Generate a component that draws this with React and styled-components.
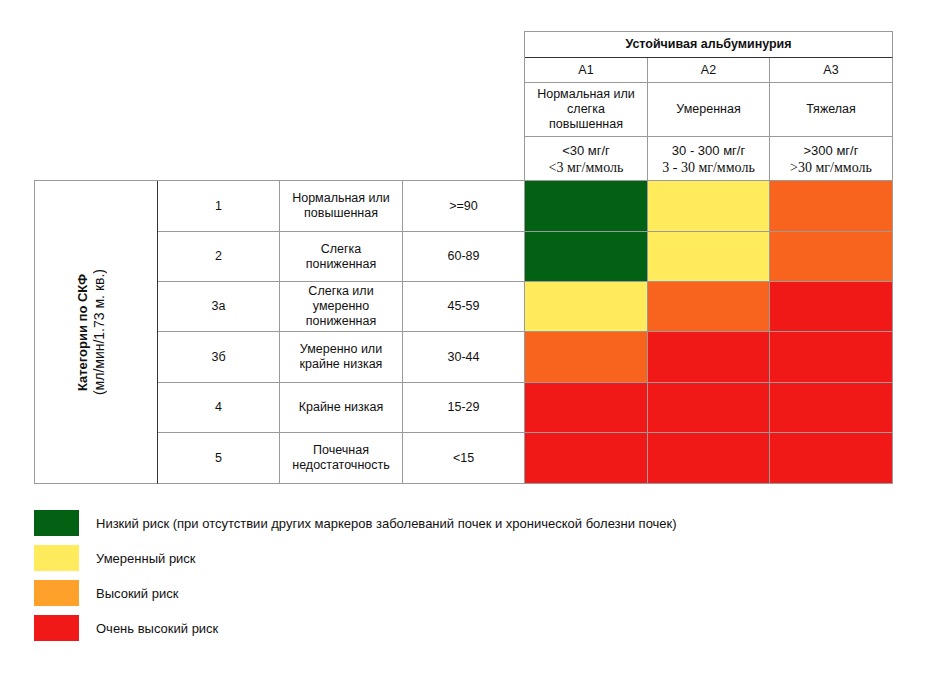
import React from 'react';
import styled, { createGlobalStyle } from 'styled-components';

const GlobalStyle = createGlobalStyle`
  body {
    margin: 0;
    background: #fff;
    font-family: "Liberation Sans", Arial, sans-serif;
    color: #111;
  }
`;

const COLORS = {
  g: '#036114',
  y: '#ffeb5b',
  o: '#f8641e',
  r: '#f11818',
  legendOrange: '#fda12a',
};

const LINE = '#9a9a9a';
const DARK = '#333';

const Page = styled.div`
  padding: 31px 0 40px 34px;
`;

const HeaderGrid = styled.div`
  display: grid;
  grid-template-columns: 123px 122px 123px;
  grid-template-rows: 26px 25px 54px 43px;
  width: max-content;
  margin-left: 490px;
  border-top: 1px solid ${LINE};
  border-left: 1px solid ${LINE};
`;

const HeadCell = styled.div`
  box-sizing: border-box;
  display: flex;
  flex-direction: column;
  align-items: center;
  justify-content: center;
  text-align: center;
  font-size: 12.5px;
  line-height: 15px;
  padding: 0 5px;
  border-right: 1px solid ${LINE};
  border-bottom: ${(p) => (p.$last ? 'none' : `1px solid ${LINE}`)};
`;

const Title = styled(HeadCell)`
  grid-column: 1 / -1;
  font-weight: bold;
  border-bottom: 1px solid ${DARK};
`;

const SansLine = styled.span`
  font-size: 13px;
  line-height: 17px;
`;

const SerifLine = styled.span`
  font-family: "Liberation Serif", "Times New Roman", serif;
  font-size: 14px;
  line-height: 17px;
`;

const BodyGrid = styled.div`
  display: grid;
  grid-template-columns: 123px 122px 123px 122px 123px 122px 123px;
  grid-template-rows: 51px 50px 50px 51px 50px 51px;
  width: max-content;
  border-top: 1px solid ${LINE};
  border-left: 1px solid ${LINE};
`;

const Cell = styled.div`
  box-sizing: border-box;
  display: flex;
  align-items: center;
  justify-content: center;
  text-align: center;
  font-size: 12.5px;
  line-height: 15px;
  padding: 0 7px;
  border-right: 1px solid ${LINE};
  border-bottom: 1px solid ${LINE};
  background: ${(p) => p.$color || 'transparent'};
`;

const LabelCell = styled(Cell)`
  grid-row: 1 / -1;
  grid-column: 1;
  padding: 0 10px 0 0;
  border-right: 1px solid ${DARK};
`;

const VerticalText = styled.div`
  writing-mode: vertical-rl;
  transform: rotate(180deg);
  font-size: 14px;
  line-height: 17px;
  text-align: center;

  b {
    display: block;
    font-size: 13px;
  }
`;

const Legend = styled.div`
  display: flex;
  flex-direction: column;
  gap: 9px;
  margin-top: 26px;
`;

const LegendRow = styled.div`
  display: flex;
  align-items: center;
  gap: 17px;
  font-size: 13px;
`;

const Swatch = styled.span`
  width: 45px;
  height: 26px;
  background: ${(p) => p.$color};
  flex: none;
`;

const rows = [
  { cat: '1', desc: 'Нормальная или повышенная', range: '>=90', risk: ['g', 'y', 'o'] },
  { cat: '2', desc: 'Слегка пониженная', range: '60-89', risk: ['g', 'y', 'o'] },
  { cat: '3а', desc: 'Слегка или умеренно пониженная', range: '45-59', risk: ['y', 'o', 'r'] },
  { cat: '3б', desc: 'Умеренно или крайне низкая', range: '30-44', risk: ['o', 'r', 'r'] },
  { cat: '4', desc: 'Крайне низкая', range: '15-29', risk: ['r', 'r', 'r'] },
  { cat: '5', desc: 'Почечная недостаточность', range: '<15', risk: ['r', 'r', 'r'] },
];

const columns = [
  { code: 'А1', name: 'Нормальная или слегка повышенная', top: '<30 мг/г', bottom: '<3 мг/ммоль' },
  { code: 'А2', name: 'Умеренная', top: '30 - 300 мг/г', bottom: '3 - 30 мг/ммоль' },
  { code: 'А3', name: 'Тяжелая', top: '>300 мг/г', bottom: '>30 мг/ммоль' },
];

const legend = [
  { color: COLORS.g, text: 'Низкий риск (при отсутствии других маркеров заболеваний почек и хронической болезни почек)' },
  { color: COLORS.y, text: 'Умеренный риск' },
  { color: COLORS.legendOrange, text: 'Высокий риск' },
  { color: COLORS.r, text: 'Очень высокий риск' },
];

export default function App() {
  return (
    <Page>
      <GlobalStyle />
      <HeaderGrid>
        <Title>Устойчивая альбуминурия</Title>
        {columns.map((c) => (
          <HeadCell key={c.code}>{c.code}</HeadCell>
        ))}
        {columns.map((c) => (
          <HeadCell key={c.code + 'n'}>{c.name}</HeadCell>
        ))}
        {columns.map((c) => (
          <HeadCell key={c.code + 'v'} $last>
            <SansLine>{c.top}</SansLine>
            <SerifLine>{c.bottom}</SerifLine>
          </HeadCell>
        ))}
      </HeaderGrid>

      <BodyGrid>
        <LabelCell>
          <VerticalText>
            <b>Категории по СКФ</b>
            (мл/мин/1.73 м. кв.)
          </VerticalText>
        </LabelCell>
        {rows.map((r) => (
          <React.Fragment key={r.cat}>
            <Cell>{r.cat}</Cell>
            <Cell>{r.desc}</Cell>
            <Cell>{r.range}</Cell>
            {r.risk.map((k, i) => (
              <Cell key={i} $color={COLORS[k]} />
            ))}
          </React.Fragment>
        ))}
      </BodyGrid>

      <Legend>
        {legend.map((l) => (
          <LegendRow key={l.text}>
            <Swatch $color={l.color} />
            {l.text}
          </LegendRow>
        ))}
      </Legend>
    </Page>
  );
}
